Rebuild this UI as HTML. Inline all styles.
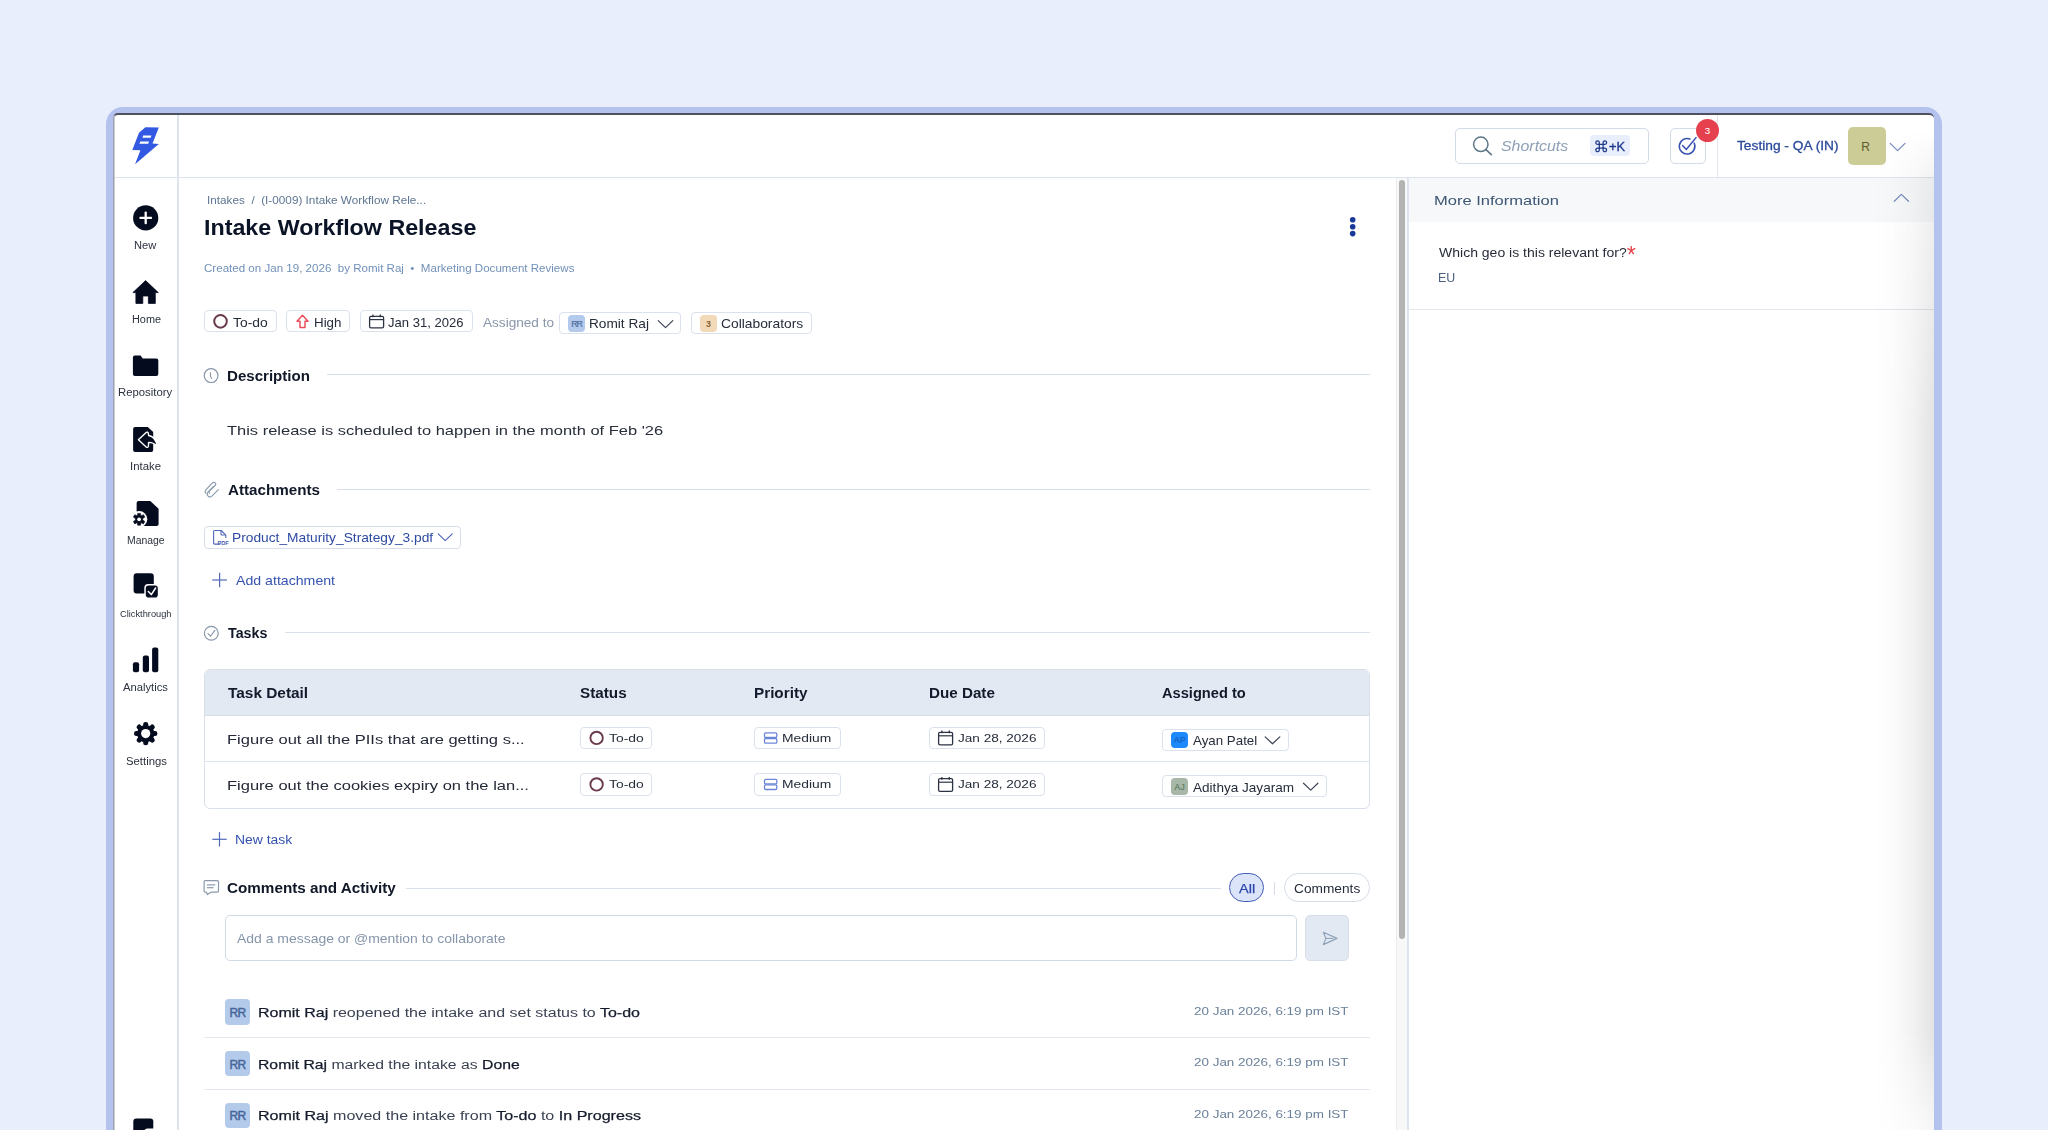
<!DOCTYPE html>
<html><head><meta charset="utf-8">
<style>
*{margin:0;padding:0;box-sizing:border-box}
html,body{width:2048px;height:1130px;overflow:hidden;background:#e8eefc;font-family:"Liberation Sans",sans-serif}
.a{position:absolute}
.t{position:absolute;white-space:nowrap;line-height:1;transform-origin:0 0}
svg{position:absolute;overflow:visible}
.pill{position:absolute;border:1px solid #dbe2ee;border-radius:4px;background:#fff}
.ln{position:absolute;background:#d9e0ea}
</style></head><body>
<!-- frame -->
<div class="a" style="left:106px;top:107px;width:1836px;height:1200px;border:7px solid #b4c3ee;border-radius:17px;background:#b4c3ee"></div>
<div class="a" style="left:113px;top:113px;width:1821px;height:1100px;background:#fff;border-radius:5px 5px 0 0;border-top:2px solid #4f5160;border-left:1px solid #9fa2ac;box-shadow:inset 1px 0 0 #cdced4"></div>

<!-- grid lines -->
<div class="ln" style="left:115px;top:177px;width:1819px;height:1px;background:#dce3ec"></div>
<div class="ln" style="left:177px;top:115px;width:1.5px;height:1015px;background:#dfe5ee"></div>
<div class="ln" style="left:1717px;top:115px;width:1px;height:62px;background:#e1e6ee"></div>

<!-- logo -->
<svg style="left:0;top:0" width="2048" height="1130" viewBox="0 0 2048 1130">
  <polygon fill="#3358e2" points="145.4,127.3 158.8,127.6 152.5,143.5 158.8,144.1 135.1,164.2 140.4,150.3 132.3,150.0 139.0,132.7"/>
  <polygon fill="#fff" points="143.2,135.4 151.4,135.4 150.6,137.7 142.4,137.7"/>
  <polygon fill="#fff" points="140.3,141.4 149.0,141.4 148.2,143.7 139.5,143.7"/>

  <!-- New -->
  <circle cx="145.7" cy="217.9" r="12.6" fill="#050b1f"/>
  <rect x="139.3" y="216.8" width="12.8" height="2.3" rx="1" fill="#fff"/>
  <rect x="144.55" y="211.5" width="2.3" height="12.8" rx="1" fill="#fff"/>

  <!-- Home -->
  <path fill="#050b1f" d="M145.6,280.6 L158.3,292.6 L155.3,292.6 L155.3,303.4 L148.4,303.4 L148.4,296.0 L142.8,296.0 L142.8,303.4 L135.9,303.4 L135.9,292.6 L132.9,292.6 Z" stroke="#050b1f" stroke-width="0.8" stroke-linejoin="round"/>

  <!-- Folder -->
  <path fill="#050b1f" d="M134.9,355.5 L140.5,355.5 L142.8,358.4 L156.3,358.4 Q158.3,358.4 158.3,360.4 L158.3,373.9 Q158.3,375.9 156.3,375.9 L134.9,375.9 Q132.9,375.9 132.9,373.9 L132.9,357.5 Q132.9,355.5 134.9,355.5 Z"/>

  <!-- Intake -->
  <path fill="#050b1f" d="M135.1,426.9 L147.8,426.9 L153.2,431.9 L153.2,449.9 Q153.2,451.9 151.2,451.9 L135.1,451.9 Q133.1,451.9 133.1,449.9 L133.1,428.9 Q133.1,426.9 135.1,426.9 Z"/>
  <path fill="#050b1f" stroke="#fff" stroke-width="1.4" stroke-linejoin="round" d="M138.4,439.8 L146.4,432.3 Q147.8,431.6 148.3,433.1 L148.6,435.5 Q155.3,436.5 157.6,446.3 Q154.0,442.6 148.6,442.4 L148.4,446.4 Q147.9,447.9 146.4,447.2 Z"/>

  <!-- Manage -->
  <path fill="#050b1f" d="M138.6,500.9 L150.3,500.9 L158.6,508.7 L158.6,523.9 Q158.6,525.9 156.6,525.9 L138.6,525.9 Q136.6,525.9 136.6,523.9 L136.6,502.9 Q136.6,500.9 138.6,500.9 Z"/>
  <circle cx="139.1" cy="519.3" r="8.2" fill="#fff"/>
  <g transform="translate(139.1,519.3)">
    <path fill="#050b1f" d="M-1.4,-5.9 L1.4,-5.9 L1.8,-3.3 L4.3,-4.6 L5.7,-2.2 L3.6,-0.6 L3.6,0.6 L5.7,2.2 L4.3,4.6 L1.8,3.3 L1.4,5.9 L-1.4,5.9 L-1.8,3.3 L-4.3,4.6 L-5.7,2.2 L-3.6,0.6 L-3.6,-0.6 L-5.7,-2.2 L-4.3,-4.6 L-1.8,-3.3 Z" stroke="#050b1f" stroke-width="0.6" stroke-linejoin="round"/>
    <circle r="1.9" fill="#fff"/>
  </g>

  <!-- Clickthrough -->
  <rect x="133.6" y="573.3" width="20.2" height="20.2" rx="3" fill="#050b1f"/>
  <rect x="144.3" y="583.9" width="15" height="15.1" rx="3.8" fill="#fff"/>
  <rect x="145.8" y="585.4" width="12" height="12.1" rx="2.8" fill="#050b1f"/>
  <path d="M148.3,591.5 L151.3,594.6 L155.6,588.0" fill="none" stroke="#fff" stroke-width="1.5" stroke-linecap="round" stroke-linejoin="round"/>

  <!-- Analytics -->
  <rect x="132.9" y="662.3" width="6.2" height="9.9" rx="2" fill="#050b1f"/>
  <rect x="142.8" y="655.4" width="6.2" height="16.8" rx="2" fill="#050b1f"/>
  <rect x="152.1" y="647.4" width="6.2" height="24.8" rx="2" fill="#050b1f"/>

  <!-- Settings gear -->
  <g transform="translate(145.7,733.6)" fill="#050b1f">
    <circle r="8.7"/>
    <rect x="-2.5" y="-11.7" width="5" height="6" rx="2.3" transform="rotate(0)"/>
    <rect x="-2.5" y="-11.7" width="5" height="6" rx="2.3" transform="rotate(45)"/>
    <rect x="-2.5" y="-11.7" width="5" height="6" rx="2.3" transform="rotate(90)"/>
    <rect x="-2.5" y="-11.7" width="5" height="6" rx="2.3" transform="rotate(135)"/>
    <rect x="-2.5" y="-11.7" width="5" height="6" rx="2.3" transform="rotate(180)"/>
    <rect x="-2.5" y="-11.7" width="5" height="6" rx="2.3" transform="rotate(225)"/>
    <rect x="-2.5" y="-11.7" width="5" height="6" rx="2.3" transform="rotate(270)"/>
    <rect x="-2.5" y="-11.7" width="5" height="6" rx="2.3" transform="rotate(315)"/>
    <circle r="4.6" fill="#fff"/>
  </g>

  <!-- bottom partial icon -->
  <rect x="133.3" y="1118.6" width="20" height="20" rx="3" fill="#050b1f"/>
  <rect x="144" y="1128.5" width="15" height="15" rx="3.8" fill="#fff"/>
</svg>

<!-- header controls -->
<div class="a" style="left:1455px;top:127.5px;width:193.5px;height:36.5px;border:1px solid #d3dbe7;border-radius:5px"></div>
<div class="a" style="left:1590px;top:135.3px;width:40.3px;height:21.2px;background:#e8eefc;border-radius:4px"></div>
<div class="a" style="left:1670px;top:127.5px;width:36.3px;height:36.5px;border:1px solid #d3dbe7;border-radius:5px"></div>
<div class="a" style="left:1696.2px;top:119px;width:23px;height:23px;background:#e6404f;border-radius:50%"></div>
<div class="a" style="left:1848px;top:127.3px;width:37.6px;height:38px;background:#cccc97;border-radius:5px"></div>

<svg style="left:0;top:0" width="2048" height="1130" viewBox="0 0 2048 1130">
  <!-- cmd glyph -->
  <g fill="none" stroke="#1f3a8a" stroke-width="1.25">
    <path d="M1599.3,144.4 L1603.1,144.4 L1603.1,148.2 L1599.3,148.2 Z"/>
    <path d="M1599.3,144.4 L1599.3,142.9 A1.75,1.75 0 1 0 1597.6,144.4 Z"/>
    <path d="M1603.1,144.4 L1603.1,142.9 A1.75,1.75 0 1 1 1604.8,144.4 Z"/>
    <path d="M1599.3,148.2 L1599.3,149.7 A1.75,1.75 0 1 1 1597.6,148.2 Z"/>
    <path d="M1603.1,148.2 L1603.1,149.7 A1.75,1.75 0 1 0 1604.8,148.2 Z"/>
  </g>
  <!-- search -->
  <circle cx="1480.8" cy="144.3" r="7.2" fill="none" stroke="#5e7789" stroke-width="1.5"/>
  <line x1="1486.0" y1="149.6" x2="1491.3" y2="154.6" stroke="#5e7789" stroke-width="1.6" stroke-linecap="round"/>
  <!-- check circle -->
  <path d="M1694.2,143.0 A7.8,7.8 0 1 1 1690.0,139.0" fill="none" stroke="#3650b0" stroke-width="1.5" stroke-linecap="round"/>
  <path d="M1682.6,145.6 L1686.3,149.5 L1696.0,137.6" fill="none" stroke="#3650b0" stroke-width="1.5" stroke-linecap="round" stroke-linejoin="round"/>
  <!-- chevron -->
  <path d="M1890.2,143.4 L1897.6,150.6 L1905.0,143.4" fill="none" stroke="#7b8dbf" stroke-width="1.3" stroke-linecap="round" stroke-linejoin="round"/>
</svg>

<!-- scrollbar & right panel -->
<div class="a" style="left:1396px;top:178px;width:11.3px;height:952px;background:#f8f8f8;border-left:1px solid #ebebeb"></div>
<div class="a" style="left:1399px;top:180px;width:6.2px;height:759px;background:#b3b3b3;border-radius:3.1px"></div>
<div class="a" style="left:1407.2px;top:178px;width:1.5px;height:952px;background:#dde4ee"></div>
<div class="a" style="left:1408.7px;top:178px;width:525.3px;height:43.5px;background:#f6f8fa"></div>
<div class="a" style="left:1408.7px;top:308.7px;width:525.3px;height:1px;background:#e2e7ee"></div>
<svg style="left:0;top:0" width="2048" height="1130" viewBox="0 0 2048 1130">
  <path d="M1894.3,201.3 L1901.4,194.4 L1908.5,201.3" fill="none" stroke="#7b8dbf" stroke-width="1.3" stroke-linecap="round" stroke-linejoin="round"/>
  <g stroke="#e5484d" stroke-width="1.4" stroke-linecap="round">
    <line x1="1631.3" y1="246.6" x2="1631.3" y2="250.6"/>
    <line x1="1627.9" y1="248.6" x2="1631.3" y2="250.6"/>
    <line x1="1634.7" y1="248.6" x2="1631.3" y2="250.6"/>
    <line x1="1629.2" y1="253.6" x2="1631.3" y2="250.6"/>
    <line x1="1633.4" y1="253.6" x2="1631.3" y2="250.6"/>
  </g>
</svg>

<!-- kebab -->
<svg style="left:0;top:0" width="2048" height="1130" viewBox="0 0 2048 1130">
  <circle cx="1352.7" cy="219.7" r="2.8" fill="#1a3898"/>
  <circle cx="1352.7" cy="226.7" r="2.8" fill="#1a3898"/>
  <circle cx="1352.7" cy="233.6" r="2.8" fill="#1a3898"/>
</svg>

<!-- pills row -->
<div class="pill" style="left:204.4px;top:310.4px;width:72.3px;height:22px"></div>
<div class="pill" style="left:286.4px;top:310.4px;width:63.5px;height:22px"></div>
<div class="pill" style="left:360.2px;top:310.4px;width:113.1px;height:22px"></div>
<div class="pill" style="left:559.3px;top:312.3px;width:122.2px;height:22px"></div>
<div class="pill" style="left:691.1px;top:312.3px;width:121.3px;height:22px"></div>
<div class="a" style="left:568.4px;top:315px;width:16.7px;height:17px;background:#b4caed;border-radius:4px"></div>
<div class="a" style="left:700.3px;top:315px;width:16.7px;height:17px;background:#f2d9b8;border-radius:4px"></div>

<svg style="left:0;top:0" width="2048" height="1130" viewBox="0 0 2048 1130">
  <!-- todo ring -->
  <circle cx="220.5" cy="321.35" r="6.3" fill="none" stroke="#6a3a4e" stroke-width="2"/>
  <!-- high arrow -->
  <path d="M302.5,315.3 L308.0,321.2 L305.0,321.2 L305.0,327.5 L300.0,327.5 L300.0,321.2 L297.0,321.2 Z" fill="none" stroke="#e8505b" stroke-width="1.5" stroke-linejoin="round"/>
  <!-- calendar -->
  <rect x="369.6" y="316.3" width="14" height="11.6" rx="1.4" fill="none" stroke="#2c3344" stroke-width="1.3"/>
  <line x1="369.6" y1="319.6" x2="383.6" y2="319.6" stroke="#2c3344" stroke-width="1.2"/>
  <line x1="372.9" y1="314.4" x2="372.9" y2="317.2" stroke="#2c3344" stroke-width="1.3"/>
  <line x1="380.3" y1="314.4" x2="380.3" y2="317.2" stroke="#2c3344" stroke-width="1.3"/>
  <!-- romit chevron -->
  <path d="M658.2,320.6 L665.5,327.6 L672.8,320.6" fill="none" stroke="#3c4456" stroke-width="1.2" stroke-linecap="round" stroke-linejoin="round"/>
</svg>

<!-- section lines -->
<div class="ln" style="left:326.8px;top:374px;width:1043px;height:1px"></div>
<div class="ln" style="left:336.8px;top:489px;width:1033px;height:1px"></div>
<div class="ln" style="left:285px;top:632.3px;width:1085px;height:1px"></div>
<div class="ln" style="left:405.5px;top:887.5px;width:815.4px;height:1px"></div>

<svg style="left:0;top:0" width="2048" height="1130" viewBox="0 0 2048 1130">
  <!-- info -->
  <circle cx="211.1" cy="375.6" r="6.9" fill="none" stroke="#8796a9" stroke-width="1.2"/>
  <path d="M210.4,372.6 Q210.0,375.6 211.6,378.4" fill="none" stroke="#8796a9" stroke-width="1.1" stroke-linecap="round"/>
  <!-- paperclip -->
  <path d="M213.5,486.5 L208.0,492.0 Q206.2,494.4 208.2,496.2 Q210.2,497.8 212.2,495.8 L218.4,489.6" fill="none" stroke="#8999ac" stroke-width="1.1" stroke-linecap="round"/>
  <path d="M215.0,485.4 Q216.6,483.6 215.0,482.6 Q213.5,481.9 212.0,483.4 L206.0,489.5 Q204.4,491.6 205.8,493.2" fill="none" stroke="#8999ac" stroke-width="1.1" stroke-linecap="round"/>
  <path d="M215.1,485.3 L209.4,491.1 Q208.5,492.5 209.6,493.4" fill="none" stroke="#8999ac" stroke-width="1.1" stroke-linecap="round"/>
  <!-- tasks check circle -->
  <circle cx="211.3" cy="633.3" r="6.9" fill="none" stroke="#8796a9" stroke-width="1.2"/>
  <path d="M208.0,633.6 L210.6,636.2 L214.8,630.4" fill="none" stroke="#8796a9" stroke-width="1.1" stroke-linecap="round" stroke-linejoin="round"/>
  <!-- comment -->
  <path d="M205.2,880.6 L217.4,880.6 Q218.5,880.6 218.5,881.7 L218.5,891.0 Q218.5,892.2 217.4,892.2 L211.0,892.2 L207.4,894.6 L206.4,892.2 L205.2,892.2 Q204.1,892.2 204.1,891.0 L204.1,881.7 Q204.1,880.6 205.2,880.6 Z" fill="none" stroke="#8a99ac" stroke-width="1.2" stroke-linejoin="round"/>
  <line x1="207.0" y1="884.9" x2="215.3" y2="884.9" stroke="#8a99ac" stroke-width="1.2"/>
  <line x1="207.0" y1="887.7" x2="213.6" y2="887.7" stroke="#8a99ac" stroke-width="1.2"/>
</svg>

<!-- attachment pill -->
<div class="pill" style="left:204.2px;top:526.4px;width:257.2px;height:23px;border-color:#d7deea"></div>
<svg style="left:0;top:0" width="2048" height="1130" viewBox="0 0 2048 1130">
  <path d="M220.4,544.1 L214.6,544.1 Q213.6,544.1 213.6,543.1 L213.6,531.5 Q213.6,530.5 214.6,530.5 L221.2,530.5 L225.8,535.2 L225.8,538.0" fill="none" stroke="#5068b8" stroke-width="1.1" stroke-linejoin="round"/>
  <path d="M221.0,530.8 L221.0,534.2 Q221.0,535.0 221.8,535.0 L225.6,535.0" fill="none" stroke="#5068b8" stroke-width="1.1"/>
  <text x="217.6" y="544.6" font-family="Liberation Sans" font-weight="700" font-size="5.8" fill="#4c64b6" letter-spacing="-0.2">PDF</text>
  <path d="M438.2,533.8 L445.2,540.6 L452.2,533.8" fill="none" stroke="#4a62b6" stroke-width="1.1" stroke-linecap="round" stroke-linejoin="round"/>
  <!-- plus icons -->
  <line x1="212.3" y1="580.0" x2="226.9" y2="580.0" stroke="#5068b8" stroke-width="1.2"/>
  <line x1="219.6" y1="572.8" x2="219.6" y2="587.2" stroke="#5068b8" stroke-width="1.2"/>
  <line x1="212.3" y1="839.3" x2="226.7" y2="839.3" stroke="#5068b8" stroke-width="1.2"/>
  <line x1="219.5" y1="832.1" x2="219.5" y2="846.5" stroke="#5068b8" stroke-width="1.2"/>
</svg>

<!-- tasks table -->
<div class="a" style="left:204.3px;top:668.5px;width:1165.4px;height:140.4px;border:1px solid #d9e0eb;border-radius:6px;overflow:hidden;background:#fff">
  <div class="a" style="left:0;top:0;width:100%;height:46.6px;background:#e3e9f3;border-bottom:1px solid #d5dde9"></div>
  <div class="a" style="left:0;top:91.8px;width:100%;height:1px;background:#dde4ee"></div>
</div>
<!-- table pills -->
<div class="pill" style="left:580.3px;top:726.5px;width:72px;height:22.7px"></div>
<div class="pill" style="left:580.3px;top:773.1px;width:72px;height:22.5px"></div>
<div class="pill" style="left:754px;top:726.5px;width:86.8px;height:22.7px"></div>
<div class="pill" style="left:754px;top:773.3px;width:86.8px;height:22.3px"></div>
<div class="pill" style="left:929.3px;top:726.5px;width:116.2px;height:22.7px"></div>
<div class="pill" style="left:929.3px;top:773.3px;width:116.2px;height:22.3px"></div>
<div class="pill" style="left:1162.2px;top:728.8px;width:126.5px;height:22.6px"></div>
<div class="pill" style="left:1162.2px;top:775.3px;width:164.5px;height:22.2px"></div>
<div class="a" style="left:1171.3px;top:731.6px;width:16.8px;height:16.8px;background:#1e88fe;border-radius:4px"></div>
<div class="a" style="left:1171.3px;top:778.2px;width:16.8px;height:16.8px;background:#a8b7a8;border-radius:4px"></div>
<svg style="left:0;top:0" width="2048" height="1130" viewBox="0 0 2048 1130">
  <circle cx="596.6" cy="737.9" r="6.2" fill="none" stroke="#6a3a4e" stroke-width="1.9"/>
  <circle cx="596.6" cy="784.4" r="6.2" fill="none" stroke="#6a3a4e" stroke-width="1.9"/>
  <!-- medium icon -->
  <rect x="764.5" y="732.9" width="12.3" height="4.6" rx="1.2" fill="none" stroke="#6b86d8" stroke-width="1.3"/>
  <rect x="764.5" y="738.5" width="12.3" height="4.6" rx="1.2" fill="none" stroke="#6b86d8" stroke-width="1.3"/>
  <rect x="764.5" y="779.3" width="12.3" height="4.6" rx="1.2" fill="none" stroke="#6b86d8" stroke-width="1.3"/>
  <rect x="764.5" y="784.9" width="12.3" height="4.6" rx="1.2" fill="none" stroke="#6b86d8" stroke-width="1.3"/>
  <!-- calendars -->
  <g stroke="#2c3344" fill="none">
    <rect x="938.6" y="732.3" width="14" height="12.6" rx="1.4" stroke-width="1.3"/>
    <line x1="938.6" y1="735.8" x2="952.6" y2="735.8" stroke-width="1.2"/>
    <line x1="941.9" y1="730.6" x2="941.9" y2="733.3" stroke-width="1.3"/>
    <line x1="949.3" y1="730.6" x2="949.3" y2="733.3" stroke-width="1.3"/>
    <rect x="938.6" y="778.7" width="14" height="12.6" rx="1.4" stroke-width="1.3"/>
    <line x1="938.6" y1="782.2" x2="952.6" y2="782.2" stroke-width="1.2"/>
    <line x1="941.9" y1="777.0" x2="941.9" y2="779.7" stroke-width="1.3"/>
    <line x1="949.3" y1="777.0" x2="949.3" y2="779.7" stroke-width="1.3"/>
  </g>
  <path d="M1265.2,736.9 L1272.5,743.8 L1279.8,736.9" fill="none" stroke="#3c4456" stroke-width="1.2" stroke-linecap="round" stroke-linejoin="round"/>
  <path d="M1303.5,783.2 L1310.7,790.1 L1317.9,783.2" fill="none" stroke="#3c4456" stroke-width="1.2" stroke-linecap="round" stroke-linejoin="round"/>
</svg>

<!-- comments controls -->
<div class="a" style="left:1229.1px;top:873px;width:34.8px;height:29.3px;background:#dce4fa;border:1.5px solid #415cb6;border-radius:15px"></div>
<div class="a" style="left:1273.5px;top:882.3px;width:1.3px;height:12.7px;background:#d6dde8"></div>
<div class="a" style="left:1284.1px;top:873px;width:86.2px;height:29.3px;border:1px solid #d6dde8;border-radius:15px"></div>
<div class="a" style="left:225.3px;top:915.2px;width:1071.3px;height:45.9px;border:1.3px solid #d0d9e6;border-radius:5px"></div>
<div class="a" style="left:1305.1px;top:915.2px;width:44px;height:45.9px;background:#e3e9f2;border:1px solid #d8dfe9;border-radius:5px"></div>
<svg style="left:0;top:0" width="2048" height="1130" viewBox="0 0 2048 1130">
  <path d="M1323.4,932.2 L1337.0,938.4 L1323.4,944.6 L1325.9,938.4 Z" fill="none" stroke="#8ea2ba" stroke-width="1.2" stroke-linejoin="round"/>
  <line x1="1325.9" y1="938.4" x2="1333.5" y2="938.4" stroke="#8ea2ba" stroke-width="1.1"/>
</svg>

<!-- activity -->
<div class="a" style="left:224.6px;top:999.1px;width:25.3px;height:25.7px;background:#b4caeb;border-radius:4px"></div>
<div class="a" style="left:224.6px;top:1051.1px;width:25.3px;height:25.4px;background:#b4caeb;border-radius:4px"></div>
<div class="a" style="left:224.6px;top:1102.6px;width:25.3px;height:25.4px;background:#b4caeb;border-radius:4px"></div>
<div class="ln" style="left:203.5px;top:1037.3px;width:1166.6px;height:1px;background:#e4e9f0"></div>
<div class="ln" style="left:203.5px;top:1088.9px;width:1166.6px;height:1px;background:#e4e9f0"></div>

<div id="s_new" class="t" style="left:133.80px;top:239.72px;font-size:10.61px;font-weight:400;color:#2a303d;letter-spacing:0.000px;transform:scaleX(1.0498);">New</div>
<div id="s_home" class="t" style="left:131.70px;top:313.52px;font-size:10.61px;font-weight:400;color:#2a303d;letter-spacing:0.000px;transform:scaleX(1.0256);">Home</div>
<div id="s_repo" class="t" style="left:117.91px;top:387.32px;font-size:10.61px;font-weight:400;color:#2a303d;letter-spacing:0.000px;transform:scaleX(1.0694);">Repository</div>
<div id="s_intake" class="t" style="left:129.60px;top:461.02px;font-size:10.61px;font-weight:400;color:#2a303d;letter-spacing:0.000px;transform:scaleX(1.0713);">Intake</div>
<div id="s_manage" class="t" style="left:126.90px;top:534.72px;font-size:10.61px;font-weight:400;color:#2a303d;letter-spacing:0.000px;transform:scaleX(0.9800);">Manage</div>
<div id="s_click" class="t" style="left:120.10px;top:609.40px;font-size:9.45px;font-weight:400;color:#2a303d;letter-spacing:0.000px;transform:scaleX(0.9815);">Clickthrough</div>
<div id="s_analytics" class="t" style="left:123.20px;top:682.22px;font-size:10.61px;font-weight:400;color:#2a303d;letter-spacing:0.000px;transform:scaleX(1.0570);">Analytics</div>
<div id="s_settings" class="t" style="left:125.70px;top:755.92px;font-size:10.61px;font-weight:400;color:#2a303d;letter-spacing:0.000px;transform:scaleX(1.0668);">Settings</div>
<div id="h_short" class="t" style="left:1501.00px;top:139.61px;font-size:13.81px;font-weight:400;color:#8ea1b7;letter-spacing:0.000px;transform:scaleX(1.1538);font-style:italic;">Shortcuts</div>
<div id="h_cmdk" class="t" style="left:1608.94px;top:141.37px;font-size:12.79px;font-weight:400;color:#1f3a8a;letter-spacing:0.000px;transform:scaleX(1.0047);-webkit-text-stroke:0.35px #1f3a8a;">+K</div>
<div id="h_badge" class="t" style="left:1704.70px;top:125.74px;font-size:9.88px;font-weight:400;color:#ffffff;letter-spacing:0.000px;">3</div>
<div id="h_org" class="t" style="left:1737.40px;top:140.05px;font-size:12.35px;font-weight:400;color:#2c4a9a;letter-spacing:0.000px;transform:scaleX(1.1135);-webkit-text-stroke:0.3px #2c4a9a;">Testing - QA (IN)</div>
<div id="h_R" class="t" style="left:1861.30px;top:140.99px;font-size:12.06px;font-weight:400;color:#5c5c2c;letter-spacing:0.000px;">R</div>
<div id="bc" class="t" style="left:207.30px;top:195.64px;font-size:10.47px;font-weight:400;color:#5d7592;letter-spacing:0.000px;transform:scaleX(1.1221);">Intakes&nbsp; /&nbsp; (I-0009) Intake Workflow Rele...</div>
<div id="title" class="t" style="left:204.30px;top:217.35px;font-size:21.8px;font-weight:700;color:#0b1326;letter-spacing:0.000px;transform:scaleX(1.0671);">Intake Workflow Release</div>
<div id="meta" class="t" style="left:204.30px;top:262.57px;font-size:10.9px;font-weight:400;color:#7090b8;letter-spacing:0.000px;transform:scaleX(1.0619);">Created on Jan 19, 2026 &nbsp;by Romit Raj &nbsp;&bull;&nbsp; Marketing Document Reviews</div>
<div id="p_todo" class="t" style="left:232.90px;top:316.85px;font-size:12.35px;font-weight:400;color:#252c3a;letter-spacing:0.000px;transform:scaleX(1.1249);">To-do</div>
<div id="p_high" class="t" style="left:313.80px;top:316.85px;font-size:12.35px;font-weight:400;color:#252c3a;letter-spacing:0.000px;transform:scaleX(1.0816);">High</div>
<div id="p_date" class="t" style="left:388.40px;top:316.85px;font-size:12.35px;font-weight:400;color:#252c3a;letter-spacing:0.000px;transform:scaleX(1.0587);">Jan 31, 2026</div>
<div id="p_assigned" class="t" style="left:482.90px;top:317.02px;font-size:12.5px;font-weight:400;color:#8796aa;letter-spacing:0.000px;transform:scaleX(1.0866);">Assigned to</div>
<div id="p_rr" class="t" style="left:571.30px;top:319.73px;font-size:8.94px;font-weight:400;color:#4e6e9e;letter-spacing:-1.200px;-webkit-text-stroke:0.2px #4e6e9e;">RR</div>
<div id="p_romit" class="t" style="left:588.70px;top:317.77px;font-size:12.79px;font-weight:400;color:#252c3a;letter-spacing:0.000px;transform:scaleX(1.0684);">Romit Raj</div>
<div id="p_3" class="t" style="left:706.00px;top:319.73px;font-size:8.94px;font-weight:700;color:#8a6232;letter-spacing:0.000px;">3</div>
<div id="p_collab" class="t" style="left:721.20px;top:317.77px;font-size:12.79px;font-weight:400;color:#252c3a;letter-spacing:0.000px;transform:scaleX(1.0811);">Collaborators</div>
<div id="sec_desc" class="t" style="left:226.70px;top:369.99px;font-size:13.95px;font-weight:700;color:#101828;letter-spacing:0.000px;transform:scaleX(1.0820);">Description</div>
<div id="desc" class="t" style="left:226.50px;top:423.68px;font-size:13.37px;font-weight:400;color:#272d39;letter-spacing:0.000px;transform:scaleX(1.2325);">This release is scheduled to happen in the month of Feb &#39;26</div>
<div id="sec_att" class="t" style="left:227.50px;top:483.69px;font-size:13.95px;font-weight:700;color:#101828;letter-spacing:0.000px;transform:scaleX(1.0907);">Attachments</div>
<div id="att_file" class="t" style="left:231.60px;top:532.07px;font-size:12.79px;font-weight:400;color:#2d4aa2;letter-spacing:0.000px;transform:scaleX(1.0764);">Product_Maturity_Strategy_3.pdf</div>
<div id="att_add" class="t" style="left:235.80px;top:575.71px;font-size:11.92px;font-weight:400;color:#3552b0;letter-spacing:0.000px;transform:scaleX(1.1875);">Add attachment</div>
<div id="sec_tasks" class="t" style="left:227.90px;top:626.61px;font-size:13.81px;font-weight:700;color:#101828;letter-spacing:0.000px;transform:scaleX(1.0326);">Tasks</div>
<div id="th_detail" class="t" style="left:228.20px;top:686.91px;font-size:13.81px;font-weight:700;color:#121a2b;letter-spacing:0.000px;transform:scaleX(1.1159);">Task Detail</div>
<div id="th_status" class="t" style="left:579.70px;top:686.91px;font-size:13.81px;font-weight:700;color:#121a2b;letter-spacing:0.000px;transform:scaleX(1.1057);">Status</div>
<div id="th_priority" class="t" style="left:753.71px;top:686.91px;font-size:13.81px;font-weight:700;color:#121a2b;letter-spacing:0.000px;transform:scaleX(1.1068);">Priority</div>
<div id="th_due" class="t" style="left:928.50px;top:686.91px;font-size:13.81px;font-weight:700;color:#121a2b;letter-spacing:0.000px;transform:scaleX(1.1008);">Due Date</div>
<div id="th_assigned" class="t" style="left:1162.10px;top:686.91px;font-size:13.81px;font-weight:700;color:#121a2b;letter-spacing:0.000px;transform:scaleX(1.0603);">Assigned to</div>
<div id="r1_text" class="t" style="left:227.20px;top:732.93px;font-size:13.08px;font-weight:400;color:#232936;letter-spacing:0.000px;transform:scaleX(1.2639);">Figure out all the PIIs that are getting s...</div>
<div id="r2_text" class="t" style="left:227.20px;top:779.43px;font-size:13.08px;font-weight:400;color:#232936;letter-spacing:0.000px;transform:scaleX(1.2624);">Figure out the cookies expiry on the lan...</div>
<div id="r1_todo" class="t" style="left:608.50px;top:731.84px;font-size:11.77px;font-weight:400;color:#252c3a;letter-spacing:0.000px;transform:scaleX(1.1813);">To-do</div>
<div id="r1_med" class="t" style="left:782.00px;top:731.84px;font-size:11.77px;font-weight:400;color:#252c3a;letter-spacing:0.000px;transform:scaleX(1.1781);">Medium</div>
<div id="r1_due" class="t" style="left:957.80px;top:731.84px;font-size:11.77px;font-weight:400;color:#252c3a;letter-spacing:0.000px;transform:scaleX(1.1531);">Jan 28, 2026</div>
<div id="r2_todo" class="t" style="left:608.50px;top:778.34px;font-size:11.77px;font-weight:400;color:#252c3a;letter-spacing:0.000px;transform:scaleX(1.1813);">To-do</div>
<div id="r2_med" class="t" style="left:782.00px;top:778.34px;font-size:11.77px;font-weight:400;color:#252c3a;letter-spacing:0.000px;transform:scaleX(1.1781);">Medium</div>
<div id="r2_due" class="t" style="left:957.80px;top:778.34px;font-size:11.77px;font-weight:400;color:#252c3a;letter-spacing:0.000px;transform:scaleX(1.1531);">Jan 28, 2026</div>
<div id="r1_ap" class="t" style="left:1174.00px;top:736.26px;font-size:8.43px;font-weight:400;color:#1a5fb4;letter-spacing:0.300px;-webkit-text-stroke:0.2px #1a5fb4;">AP</div>
<div id="r1_name" class="t" style="left:1192.90px;top:736.31px;font-size:11.92px;font-weight:400;color:#252c3a;letter-spacing:0.000px;transform:scaleX(1.1196);">Ayan Patel</div>
<div id="r2_aj" class="t" style="left:1174.60px;top:782.56px;font-size:8.43px;font-weight:400;color:#5d7d60;letter-spacing:0.200px;-webkit-text-stroke:0.2px #5d7d60;">AJ</div>
<div id="r2_name" class="t" style="left:1192.90px;top:782.91px;font-size:11.92px;font-weight:400;color:#252c3a;letter-spacing:0.000px;transform:scaleX(1.1396);">Adithya Jayaram</div>
<div id="newtask" class="t" style="left:234.79px;top:834.16px;font-size:12.21px;font-weight:400;color:#3552b0;letter-spacing:0.000px;transform:scaleX(1.1413);">New task</div>
<div id="sec_comments" class="t" style="left:227.40px;top:880.96px;font-size:14.1px;font-weight:700;color:#101828;letter-spacing:0.000px;transform:scaleX(1.0816);">Comments and Activity</div>
<div id="c_all" class="t" style="left:1238.60px;top:882.99px;font-size:12.06px;font-weight:400;color:#2d48a8;letter-spacing:0.000px;transform:scaleX(1.2045);-webkit-text-stroke:0.25px #2d48a8;">All</div>
<div id="c_comments" class="t" style="left:1294.40px;top:882.99px;font-size:12.06px;font-weight:400;color:#262d3b;letter-spacing:0.000px;transform:scaleX(1.1379);">Comments</div>
<div id="c_placeholder" class="t" style="left:236.80px;top:933.19px;font-size:12.06px;font-weight:400;color:#8595aa;letter-spacing:0.000px;transform:scaleX(1.1578);">Add a message or @mention to collaborate</div>
<div id="a1" class="t" style="left:257.80px;top:1005.90px;font-size:13.23px;font-weight:400;color:#3b4252;letter-spacing:0.000px;transform:scaleX(1.2096);"><span style="color:#141b2a;-webkit-text-stroke:0.25px #141b2a">Romit Raj</span> reopened the intake and set status to <span style="color:#141b2a;-webkit-text-stroke:0.25px #141b2a">To-do</span></div>
<div id="a2" class="t" style="left:257.80px;top:1057.60px;font-size:13.23px;font-weight:400;color:#3b4252;letter-spacing:0.000px;transform:scaleX(1.1910);"><span style="color:#141b2a;-webkit-text-stroke:0.25px #141b2a">Romit Raj</span> marked the intake as <span style="color:#141b2a;-webkit-text-stroke:0.25px #141b2a">Done</span></div>
<div id="a3" class="t" style="left:257.80px;top:1109.30px;font-size:13.23px;font-weight:400;color:#3b4252;letter-spacing:0.000px;transform:scaleX(1.2159);"><span style="color:#141b2a;-webkit-text-stroke:0.25px #141b2a">Romit Raj</span> moved the intake from <span style="color:#141b2a;-webkit-text-stroke:0.25px #141b2a">To-do</span> to <span style="color:#141b2a;-webkit-text-stroke:0.25px #141b2a">In Progress</span></div>
<div id="ts1" class="t" style="left:1194.40px;top:1004.84px;font-size:11.77px;font-weight:400;color:#6b8099;letter-spacing:0.000px;transform:scaleX(1.1413);">20 Jan 2026, 6:19 pm IST</div>
<div id="av1" class="t" style="left:229.60px;top:1006.99px;font-size:12.06px;font-weight:400;color:#46669a;letter-spacing:-0.700px;-webkit-text-stroke:0.45px #46669a;">RR</div>
<div id="ts2" class="t" style="left:1194.40px;top:1056.44px;font-size:11.77px;font-weight:400;color:#6b8099;letter-spacing:0.000px;transform:scaleX(1.1413);">20 Jan 2026, 6:19 pm IST</div>
<div id="av2" class="t" style="left:229.60px;top:1058.59px;font-size:12.06px;font-weight:400;color:#46669a;letter-spacing:-0.700px;-webkit-text-stroke:0.45px #46669a;">RR</div>
<div id="ts3" class="t" style="left:1194.40px;top:1108.14px;font-size:11.77px;font-weight:400;color:#6b8099;letter-spacing:0.000px;transform:scaleX(1.1413);">20 Jan 2026, 6:19 pm IST</div>
<div id="av3" class="t" style="left:229.60px;top:1110.29px;font-size:12.06px;font-weight:400;color:#46669a;letter-spacing:-0.700px;-webkit-text-stroke:0.45px #46669a;">RR</div>
<div id="rp_title" class="t" style="left:1433.89px;top:194.00px;font-size:13.59px;font-weight:400;color:#3d5673;letter-spacing:0.000px;transform:scaleX(1.2170);">More Information</div>
<div id="rp_q" class="t" style="left:1438.60px;top:247.42px;font-size:12.5px;font-weight:400;color:#262c38;letter-spacing:0.000px;transform:scaleX(1.1209);">Which geo is this relevant for?</div>
<div id="rp_eu" class="t" style="left:1437.72px;top:271.96px;font-size:12.21px;font-weight:400;color:#4b6182;letter-spacing:0.000px;transform:scaleX(1.0161);">EU</div>
<!-- right shadow -->
<div class="a" style="left:1874px;top:130px;width:60px;height:1000px;background:linear-gradient(90deg,rgba(0,0,0,0) 0%,rgba(0,0,0,0.015) 30%,rgba(0,0,0,0.05) 65%,rgba(0,0,0,0.11) 100%);-webkit-mask-image:linear-gradient(180deg,transparent 0px,rgba(0,0,0,0.5) 50px,#000 300px,#000 900px,rgba(0,0,0,0.3) 1000px)"></div>
</body></html>
